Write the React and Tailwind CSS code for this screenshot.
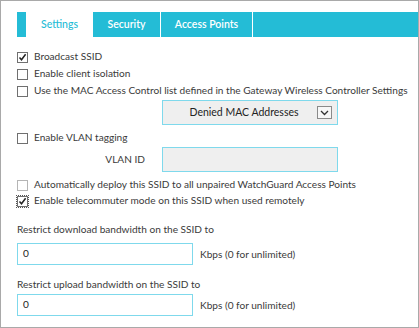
import React from 'react';

function Check({ checked, light, focus }) {
  return (
    <span
      className={`w-[11px] h-[11px] shrink-0 flex items-center justify-center bg-white border ${
        light ? 'border-[#b5b5b5]' : 'border-[#707070]'
      } ${focus ? 'outline-1 outline-dotted outline-[#555] outline-offset-[0px]' : ''}`}
    >
      {checked && (
        <svg width="9" height="9" viewBox="0 0 9 9">
          <path d="M1.5 4.5 L3.5 6.8 L7.6 1.3" fill="none" stroke="#222" strokeWidth="1.5" />
        </svg>
      )}
    </span>
  );
}

function Row({ label, checked, light, focus, className = '' }) {
  return (
    <div className={`flex items-center gap-[6px] h-4 whitespace-nowrap ${className}`}>
      <Check checked={checked} light={light} focus={focus} />
      <span>{label}</span>
    </div>
  );
}

export default function App() {
  return (
    <div
      className="w-[419px] h-[328px] bg-white border border-[#a9a9a9] text-[10.1px] text-[#3a3a3a] overflow-hidden"
      style={{ fontFamily: 'Lato, "Open Sans", sans-serif' }}
    >
      {/* Tabs */}
      <div className="mt-[11px] ml-4 h-[25px] bg-[#24bcd6] flex pl-[9px] text-[10.5px]">
        <div className="w-[67px] bg-white text-[#24bcd6] font-medium flex items-center justify-center">Settings</div>
        <div className="w-[68px] text-white font-semibold flex items-center justify-center border-r border-white">Security</div>
        <div className="w-[92px] text-white font-semibold flex items-center justify-center border-r border-white">Access Points</div>
      </div>

      <div className="pl-4 pt-[12px]">
        <Row label="Broadcast SSID" checked />
        <Row label="Enable client isolation" className="mt-[1px]" />
        <Row label="Use the MAC Access Control list defined in the Gateway Wireless Controller Settings" className="mt-[1px]" />

        <div className="ml-[145px] mt-[1px] w-[176px] h-[25px] bg-[#efefef] border border-[#7fd9ec] flex items-center">
          <span className="flex-1 text-center pl-2 text-[10.5px] text-[#222]">Denied MAC Addresses</span>
          <span className="mr-[5px] w-[15px] h-[13px] border border-[#8a8a8a] bg-[#f7f7f7] flex items-center justify-center">
            <svg width="9" height="6" viewBox="0 0 9 6">
              <path d="M1 1 L4.5 4.5 L8 1" fill="none" stroke="#333" strokeWidth="1.3" />
            </svg>
          </span>
        </div>

        <Row label="Enable VLAN tagging" className="mt-[5px]" />

        <div className="flex items-center mt-[1px]">
          <span className="w-[145px] pr-[17px] text-right">VLAN ID</span>
          <div className="w-[176px] h-[25px] bg-[#efefef] border border-[#7fd9ec]" />
        </div>

        <Row label="Automatically deploy this SSID to all unpaired WatchGuard Access Points" light className="mt-[5px]" />
        <Row label="Enable telecommuter mode on this SSID when used remotely" checked focus />

        <div className="mt-[13px] h-4 flex items-center">Restrict download bandwidth on the SSID to</div>
        <div className="flex items-center mt-[5px]">
          <div className="w-[176px] h-[22px] border border-[#7fd9ec] flex items-center pl-[5px] text-[#222]">0</div>
          <span className="ml-[7px] mt-[2px]">Kbps (0 for unlimited)</span>
        </div>

        <div className="mt-[12px] h-4 flex items-center">Restrict upload bandwidth on the SSID to</div>
        <div className="flex items-center mt-[1px]">
          <div className="w-[176px] h-[22px] border border-[#7fd9ec] flex items-center pl-[5px] text-[#222]">0</div>
          <span className="ml-[7px] mt-[2px]">Kbps (0 for unlimited)</span>
        </div>
      </div>
    </div>
  );
}
